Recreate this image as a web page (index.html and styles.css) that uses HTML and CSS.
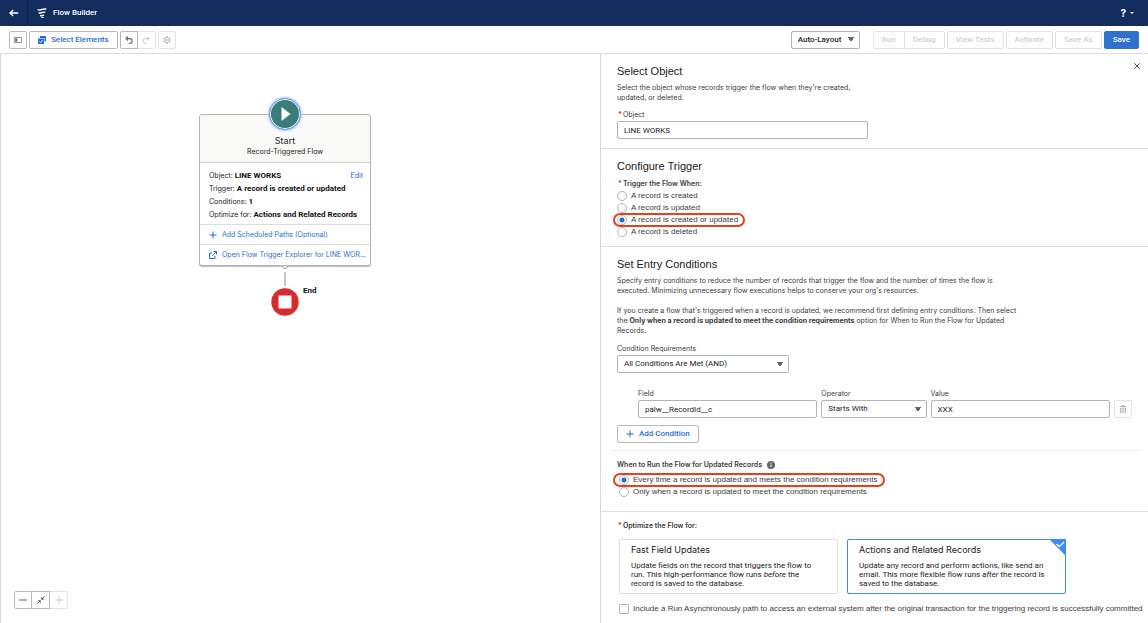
FILE: index.html
```html
<!DOCTYPE html>
<html lang="en">
<head>
<meta charset="utf-8">
<title>Flow Builder</title>
<link rel="stylesheet" href="styles.css">
</head>
<body>
<header class="topbar">
  <a class="back" href="#" aria-label="Back"><svg width="10" height="8" viewBox="0 0 10 8"><path d="M9.300 4H1M4.200 1 1 4l3.200 3" fill="none" stroke="#fff" stroke-width="1.400"/></svg></a>
  <div class="brand">
    <svg width="10" height="10" viewBox="0 0 10 10" fill="none" stroke="#fff" stroke-width="1.400" stroke-linecap="round"><path d="M1 1.800C2.600 3 4.500.6 8.800 1M2 4.900c1.600 1 2.800-1.100 5.800-.7M3.600 7.600c.8.500 1.600-.5 2.900-.3M5 9.400h1"/></svg>
    <span>Flow Builder</span>
  </div>
  <button class="help" aria-label="Help">?<span class="help-caret"></span></button>
</header>

<nav class="toolbar">
  <button class="btn icon-btn" aria-label="Toggle toolbox"><svg width="8" height="8" viewBox="0 0 8 8"><path d="M.5 1.500h7v5h-7z" fill="none" stroke="#777" stroke-width=".8"/><path d="M1.300 2.300h2v3.400h-2z" fill="#666"/></svg></button>
  <button class="btn select-elements">
    <svg width="8" height="8" viewBox="0 0 8 8"><path d="M2 0h6v5.500H6.500V2H2z" fill="#2a6fce"/><path d="M0 2.500h6V8H0z" fill="#2a6fce"/><path d="m1.300 5.200 1.300 1.300 2.200-2.500" fill="none" stroke="#fff" stroke-width=".8"/></svg>
    Select Elements
  </button>
  <div class="btn-group">
    <button class="btn icon-btn" aria-label="Undo"><svg width="8" height="8" viewBox="0 0 8 8"><path d="M3 .5.9 2.600 3 4.700M1 2.600h3.800a2.200 2.200 0 0 1 0 4.600H3.500" fill="none" stroke="#666" stroke-width="1.100"/></svg></button>
    <button class="btn icon-btn muted" disabled aria-label="Redo"><svg width="8" height="8" viewBox="0 0 8 8"><path d="m5 .5 2.100 2.100L5 4.700M7 2.600H3.200a2.200 2.200 0 0 0 0 4.600h1.300" fill="none" stroke="#c4c4c4"/></svg></button>
  </div>
  <button class="btn icon-btn muted" disabled aria-label="Settings"><svg width="8" height="8" viewBox="0 0 8 8" fill="none" stroke="#b8b8b8"><circle cx="4" cy="4" r="2.600" stroke-width="1"/><circle cx="4" cy="4" r=".8" stroke-width=".8"/><path d="M4 0v1.300M4 6.700V8M.5 2l1.100.6M6.400 5.400l1.100.6M.5 6l1.100-.6M6.400 2.600 7.500 2" stroke-width="1.300"/></svg></button>
  <select class="control layout-select" aria-label="Layout"><option>Auto-Layout</option></select>
  <div class="btn-group">
    <button class="btn muted" disabled>Run</button>
    <button class="btn muted" disabled>Debug</button>
  </div>
  <button class="btn muted" disabled>View Tests</button>
  <button class="btn muted" disabled>Activate</button>
  <button class="btn muted" disabled>Save As</button>
  <button class="btn primary">Save</button>
</nav>

<main class="workspace">
  <section class="canvas" aria-label="Canvas">
    <div class="flow">
      <article class="card">
        <div class="card-head">
          <span class="start-icon"><svg width="12" height="16" viewBox="0 0 12 16"><path d="M1.500 1 10.500 8l-9 7z" fill="#fff"/></svg></span>
          <h2>Start</h2>
          <p>Record-Triggered Flow</p>
        </div>
        <div class="card-info">
          <a href="#" class="edit">Edit</a>
          <p>Object: <b>LINE WORKS</b></p>
          <p>Trigger: <b>A record is created or updated</b></p>
          <p>Conditions: <b>1</b></p>
          <p>Optimize for: <b>Actions and Related Records</b></p>
        </div>
        <a href="#" class="card-link"><svg width="8" height="8" viewBox="0 0 8 8"><path d="M4 .5v7M.5 4h7" stroke="#2a6fce" stroke-width="1"/></svg><span>Add Scheduled Paths (Optional)</span></a>
        <a href="#" class="card-link"><svg width="8" height="8" viewBox="0 0 8 8" fill="none" stroke="#2a6fce" stroke-width="1"><path d="M3.300 2H.5v5.500H6V4.700M4.500.5h3v3M7.500.5 3.300 4.700"/></svg><span>Open Flow Trigger Explorer for LINE WOR…</span></a>
      </article>
      <svg class="connector" width="8" height="22" viewBox="0 0 8 22"><path d="M1.500 0a2.500 2.500 0 0 0 5 0" fill="#fff" stroke="#8c8c8c" stroke-width=".8"/><path d="M4 6v14" stroke="#8c8c8c"/></svg>
      <div class="end-node">
        <svg width="28" height="28" viewBox="0 0 28 28"><circle cx="14" cy="14" r="13.700" fill="#d92b2b"/><path d="M7.500 7.500h13v13h-13z" fill="#fff"/></svg>
        <b class="end-label">End</b>
      </div>
    </div>
    <div class="btn-group zoom-group">
      <button class="btn icon-btn" aria-label="Zoom out"><svg width="8" height="8" viewBox="0 0 8 8"><path d="M0 4h8" stroke="#666"/></svg></button>
      <button class="btn icon-btn" aria-label="Fit to view"><svg width="8" height="8" viewBox="0 0 8 8"><path d="M4.300.8v2.900h2.900zM.8 4.300h2.900v2.900z" fill="#555"/><path d="M7.500.5 5 3M.5 7.500 3 5" stroke="#555"/></svg></button>
      <button class="btn icon-btn muted" disabled aria-label="Zoom in"><svg width="8" height="8" viewBox="0 0 8 8"><path d="M0 4h8M4 0v8" stroke="#c9c9c9"/></svg></button>
    </div>
  </section>

  <form class="panel">
    <button type="button" class="close" aria-label="Close"><svg width="6" height="6" viewBox="0 0 6 6"><path d="m.3.3 5.400 5.400M5.700.3.3 5.700" stroke="#555"/></svg></button>

    <section class="block object-block">
      <h2>Select Object</h2>
      <p class="help-text short">Select the object whose records trigger the flow when they're created, updated, or deleted.</p>
      <label class="label" for="object"><i class="req">*</i>Object</label>
      <input class="control object-input" id="object" type="text" value="LINE WORKS">
    </section>

    <section class="block trigger-block">
      <h2>Configure Trigger</h2>
      <fieldset>
        <legend class="legend"><i class="req">*</i>Trigger the Flow When:</legend>
        <label class="option"><input type="radio" name="trigger">A record is created</label>
        <label class="option"><input type="radio" name="trigger">A record is updated</label>
        <label class="option marked"><input type="radio" name="trigger" checked>A record is created or updated</label>
        <label class="option"><input type="radio" name="trigger">A record is deleted</label>
      </fieldset>
    </section>

    <section class="block entry-block">
      <h2>Set Entry Conditions</h2>
      <p class="help-text">Specify entry conditions to reduce the number of records that trigger the flow and the number of times the flow is executed. Minimizing unnecessary flow executions helps to conserve your org's resources.</p>
      <p class="help-text last">If you create a flow that's triggered when a record is updated, we recommend first defining entry conditions. Then select the <b>Only when a record is updated to meet the condition requirements</b> option for When to Run the Flow for Updated Records.</p>
      <label class="label" for="requirements">Condition Requirements</label>
      <select class="control requirements" id="requirements"><option>All Conditions Are Met (AND)</option></select>
      <div class="condition">
        <div><label class="label" for="field">Field</label><input class="control" id="field" type="text" value="palw__RecordId__c"></div>
        <div><label class="label" for="operator">Operator</label><select class="control" id="operator"><option>Starts With</option></select></div>
        <div><label class="label" for="value">Value</label><input class="control" id="value" type="text" value="XXX"></div>
        <button type="button" class="btn icon-btn muted" disabled aria-label="Delete condition"><svg width="8" height="8" viewBox="0 0 8 8"><path d="M.5 1.500h7M3 1.500v-1h2v1" fill="none" stroke="#b0b0b0" stroke-width=".9"/><path d="M1.500 3.200h5V8h-5zM3.200 4v3M4.800 4v3" fill="none" stroke="#b0b0b0" stroke-width=".9"/></svg></button>
      </div>
      <button type="button" class="btn add-condition"><svg width="8" height="8" viewBox="0 0 8 8"><path d="M4 .5v7M.5 4h7" stroke="#2a6fce" stroke-width="1"/></svg>Add Condition</button>
      <fieldset class="when">
        <legend class="legend when-legend">When to Run the Flow for Updated Records <svg width="8" height="8" viewBox="0 0 8 8"><circle cx="4" cy="4" r="4" fill="#666"/><path d="M4 1.500v1.200M4 3.500v2.800" stroke="#fff"/></svg></legend>
        <label class="option inset marked"><input type="radio" name="when" checked>Every time a record is updated and meets the condition requirements</label>
        <label class="option inset"><input type="radio" name="when">Only when a record is updated to meet the condition requirements</label>
      </fieldset>
    </section>

    <section class="block optimize-block">
      <fieldset>
        <legend class="legend"><i class="req">*</i>Optimize the Flow for:</legend>
        <div class="tiles">
          <label class="tile"><input class="tile-input" type="radio" name="optimize"><strong>Fast Field Updates</strong><span>Update fields on the record that triggers the flow to run. This high-performance flow runs <em>before</em> the record is saved to the database.</span></label>
          <label class="tile selected"><input class="tile-input" type="radio" name="optimize" checked><strong>Actions and Related Records</strong><span>Update any record and perform actions, like send an email. This more flexible flow runs <em>after</em> the record is saved to the database.</span>
            <svg class="tick" width="17" height="17" viewBox="0 0 17 17"><path d="M0 0h17v17z" fill="#3c8cf5"/><path d="m7.500 5 2.700 2.700L15 3" fill="none" stroke="#fff" stroke-width="1.300"/></svg>
          </label>
        </div>
      </fieldset>
      <label class="option inset async"><input type="checkbox">Include a Run Asynchronously path to access an external system after the original transaction for the triggering record is successfully committed</label>
    </section>
  </form>
</main>
</body>
</html>
```
FILE: styles.css
```css
* { box-sizing: border-box; }
body {
  margin: 0;
  height: 100vh;
  display: flex;
  flex-direction: column;
  overflow: hidden;
  background: #fff;
  color: #222;
  font: 7px/10px Inter, "Liberation Sans", sans-serif;
}
h2, p, fieldset, legend { margin: 0; padding: 0; border: 0; }
fieldset { min-width: 0; }
a { color: #2a6fce; text-decoration: none; }
svg { display: block; flex: none; }
button, input, select { font: inherit; color: inherit; margin: 0; }

/* Header */
.topbar { display: flex; align-items: center; height: 26px; flex: none; background: #132c5e; color: #fff; }
.back { display: flex; align-items: center; justify-content: center; width: 28px; height: 26px; border-right: 1px solid #0d2350; }
.brand { display: flex; align-items: center; gap: 6px; padding-left: 9px; font: 500 8px/10px Roboto, sans-serif; }
.help { display: flex; align-items: center; gap: 4px; margin-left: auto; margin-right: 14px; padding: 0; border: 0; background: none; color: #fff; font-size: 10px; font-weight: 700; }
.help-caret { border: 2px solid transparent; border-top-color: #fff; border-bottom: 0; }

/* Buttons and controls */
.btn {
  display: flex; align-items: center; justify-content: center; gap: 5px;
  height: 18px; padding: 0 8px;
  border: 1px solid #b9b9b9; border-radius: 2px;
  background: #fff; color: #2a6fce; font: 500 8px/10px Roboto, sans-serif;
  white-space: nowrap;
}
.icon-btn { width: 18px; padding: 0; }
.btn.muted { border-color: #e3e3e3; color: #cfcfcf; }
.btn.primary { border-color: #2e71ce; background: #2e71ce; color: #fff; }
.btn-group { display: flex; }
.btn-group .btn + .btn { border-left-width: 0; border-top-left-radius: 0; border-bottom-left-radius: 0; }
.btn-group .btn:not(:last-child) { border-top-right-radius: 0; border-bottom-right-radius: 0; }
.control {
  display: block; width: 100%; height: 18px; padding: 0 6px;
  border: 1px solid #b4b4b4; border-radius: 2px; background-color: #fff;
  appearance: none; font: 8px/16px Roboto, sans-serif; color: #222;
}
select.control {
  padding-right: 14px;
  background-image: conic-gradient(from -35deg at 50% 100%, #666 70deg, transparent 0);
  background-repeat: no-repeat; background-size: 6px 5px; background-position: right 5px center;
}

.toolbar { display: flex; align-items: center; gap: 2px; flex: none; height: 28px; padding: 0 9px; border-bottom: 1px solid #dedede; }
.toolbar .layout-select { width: 69px; margin-left: auto; margin-right: 11px; font-weight: 500; }

/* Canvas */
.workspace { display: flex; flex: 1; min-height: 0; }
.canvas { position: relative; flex: 600 1 0; min-width: 0; border-left: 1px solid #d8d8d8; }
.flow { position: absolute; top: 60px; left: 198px; width: 172px; }
.card { padding-bottom: 1px; border: 1px solid #b5b5b5; border-radius: 3px; background: #fff; box-shadow: 0 1px 1px #bbb; }
.card-head { position: relative; padding: 20px 0 5px; border-bottom: 1px solid #cfcfcf; border-radius: 3px 3px 0 0; background: #f9f9f8; text-align: center; }
.card-head h2 { font-size: 9px; font-weight: 400; line-height: 12px; }
.card-head p { line-height: 10px; }
.start-icon {
  position: absolute; left: 50%; top: -17px; transform: translateX(-50%);
  display: flex; align-items: center; justify-content: center; padding-left: 2px;
  width: 32px; height: 32px; border: 1px solid #fff; border-radius: 50%;
  outline: 1px solid #5b93e8; outline-offset: -1px;
  background: #3a7d78; box-shadow: inset 0 0 0 1px #fff, 0 0 2px 1px #a9c8f5;
}
.card-info { padding: 6px 7px 3px 9px; line-height: 13px; white-space: nowrap; }
.card-info b, .end-label { color: #111; font-family: Roboto, sans-serif; font-size: 8px; }
.edit { float: right; }
.card-link { display: flex; align-items: center; gap: 5px; height: 20px; padding: 0 2px 0 9px; border-top: 1px solid #ddd; }
.card-link span { overflow: hidden; white-space: nowrap; text-overflow: ellipsis; }
.connector { margin: 0 auto; }
.end-node { position: relative; display: flex; justify-content: center; }
.end-label { position: absolute; left: 104px; top: -2px; }
.zoom-group { position: absolute; left: 13px; bottom: 14px; }

/* Properties panel */
.panel { position: relative; flex: 548 1 0; min-width: 0; overflow: hidden; border-left: 1px solid #d8d8d8; color: #3c3c3c; }
.close { position: absolute; right: 5px; top: 6px; padding: 3px; border: 0; background: none; }
.block { padding: 10px 16px 9px; border-bottom: 1px solid #e0e0e0; }
.block h2 { margin-bottom: 5px; color: #222; font: 400 11px/14px "Liberation Sans", Arial, sans-serif; }
.help-text { max-width: 400px; margin-bottom: 10px; }
.help-text.short { max-width: 240px; margin-bottom: 7px; }
.help-text.last { margin-bottom: 8px; }
.label { display: block; margin-bottom: 2px; line-height: 9px; }
.legend { font-weight: 600; line-height: 10px; }
.req { margin: 0 1px; color: #c23934; font-style: normal; font-weight: 700; }
.object-input { max-width: 251px; }
.option { display: flex; align-items: center; gap: 4px; width: max-content; height: 12px; font: 8px/10px "Liberation Sans", Arial, sans-serif; }
.option input { appearance: none; width: 10px; height: 10px; border: 1px solid #b4b4b4; border-radius: 50%; background: #fff; }
.option input[type="checkbox"] { border-radius: 1px; }
.option input:checked { background: radial-gradient(circle, #2468c9 2px, #fff 3px); }
.option.inset { padding-left: 2px; }
.option.marked { margin-left: -3px; padding: 0 6px 0 3px; border-radius: 6px; outline: 2px solid #e8401f; outline-offset: -1px; }
.option.inset.marked { padding-left: 5px; }
.trigger-block { padding-bottom: 8px; }
.trigger-block h2 { margin-bottom: 6px; }
.trigger-block .legend { margin-bottom: 1px; }
.requirements { max-width: 172px; }
.condition { display: grid; grid-template-columns: 179fr 105fr 179fr 18px; gap: 4px; align-items: end; margin: 16px 0 7px 21px; }
.when { margin: 7px -7px 0; padding: 9px 7px 0; border-top: 1px solid #ececec; }
.when-legend { display: flex; gap: 5px; align-items: center; float: left; width: 100%; margin-bottom: 4px; }
.when .option { clear: both; }
.entry-block { padding-bottom: 13px; }
.optimize-block { padding-top: 9px; border-bottom: 0; }
.tiles { display: grid; grid-template-columns: 219px 219px; gap: 9px; margin: 8px 0 9px 2px; }
.tile { position: relative; display: block; min-height: 55px; padding: 4px 20px 4px 11px; border: 1px solid #e0e0e0; border-radius: 2px; color: #222; }
.tile strong { display: block; margin-bottom: 5px; font: 400 9px/12px Inter, sans-serif; }
.tile span { display: block; font: 8px/9px Roboto, sans-serif; }
.tile.selected { border-color: #3c8cf5; }
.tile-input { position: absolute; opacity: 0; pointer-events: none; }
.tick { position: absolute; right: -1px; top: -1px; }
```
